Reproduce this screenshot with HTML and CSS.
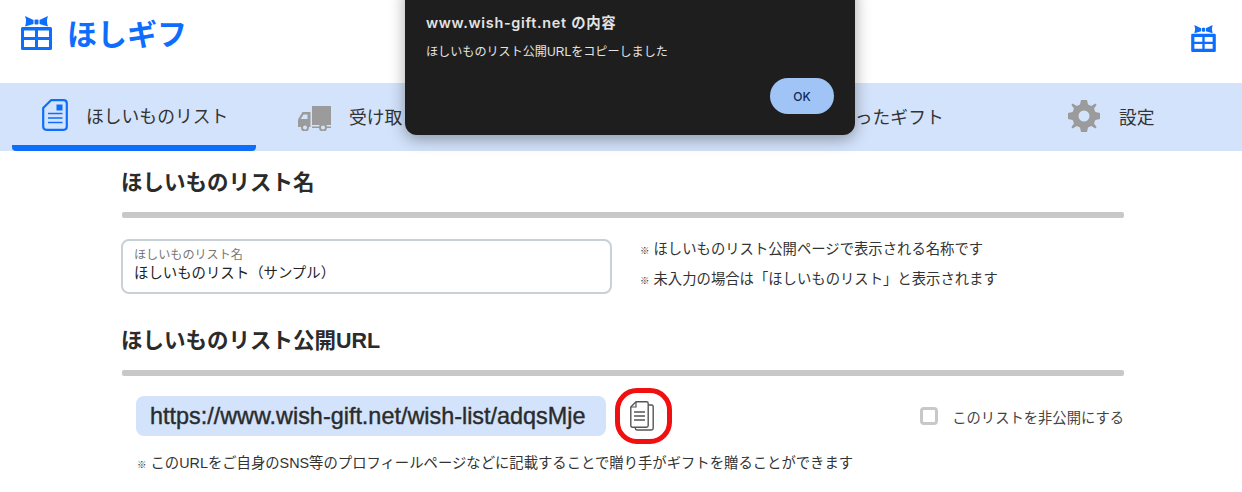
FILE: index.html
```html
<!DOCTYPE html>
<html lang="ja">
<head>
    <meta charset="UTF-8">
    <title>ほしギフ</title>
    <link rel="stylesheet" href="styles.css">
</head>
<body>
    <header class="site-header">
        <a class="logo">
            <svg class="logo-icon" viewBox="0 0 31 34">
                <path d="M4 0 L12.5 4 V8 L4 10.5 Q6 5 4 0Z M27 0 L18.5 4 V8 L27 10.5 Q25 5 27 0Z" fill="#0d6efd"/>
                <rect x="13.5" y="3.5" width="4" height="5" rx="1" fill="#0d6efd"/>
                <path fill-rule="evenodd" d="M1.5 11 H29.5 Q31 11 31 12.5 V32.5 Q31 34 29.5 34 H1.5 Q0 34 0 32.5 V12.5 Q0 11 1.5 11Z M3 14.5 V21 H14 V14.5Z M17 14.5 V21 H28 V14.5Z M3 24 V31 H14 V24Z M17 24 V31 H28 V24Z" fill="#0d6efd"/>
            </svg>
            <span class="logo-text">ほしギフ</span>
        </a>
        <svg class="user-icon" viewBox="0 0 31 34">
            <path d="M4 0 L12.5 4 V8 L4 10.5 Q6 5 4 0Z M27 0 L18.5 4 V8 L27 10.5 Q25 5 27 0Z" fill="#0d6efd"/>
            <rect x="13.5" y="3.5" width="4" height="5" rx="1" fill="#0d6efd"/>
            <path fill-rule="evenodd" d="M1.5 11 H29.5 Q31 11 31 12.5 V32.5 Q31 34 29.5 34 H1.5 Q0 34 0 32.5 V12.5 Q0 11 1.5 11Z M4 15 V21 H14 V15Z M17 15 V21 H27 V15Z M4 24 V30 H14 V24Z M17 24 V30 H27 V24Z" fill="#0d6efd"/>
        </svg>
    </header>

    <nav class="tabs">
        <a class="tab active">
            <svg class="tab-icon doc-icon" viewBox="0 0 26 32">
                <path d="M9 1.2 H21.5 Q24.8 1.2 24.8 4.5 V27.5 Q24.8 30.8 21.5 30.8 H4.5 Q1.2 30.8 1.2 27.5 V9 Z" fill="none" stroke="#0d6efd" stroke-width="2.2" stroke-linejoin="round"/>
                <rect x="14.5" y="5.5" width="6" height="6" fill="#0d6efd"/>
                <path d="M6 14.5 H20.5 M6 19 H20.5 M6 23.5 H20.5" stroke="#0d6efd" stroke-width="1.6"/>
            </svg>
            <span>ほしいものリスト</span>
        </a>
        <a class="tab">
            <svg class="tab-icon truck-icon" viewBox="0 0 33 25">
                <rect x="14" y="0" width="19" height="19" fill="#9b9b9b"/>
                <path d="M12.5 6 V21 H0 V13.5 L4.5 6 Z" fill="#9b9b9b"/>
                <path d="M5.5 8.5 H9.5 V13 H2.8 Z" fill="#d3e3fb"/>
                <rect x="14" y="20.5" width="19" height="1.5" fill="#9b9b9b"/>
                <circle cx="7" cy="21.5" r="3" fill="#d3e3fb" stroke="#9b9b9b" stroke-width="2"/>
                <circle cx="25" cy="21.5" r="3" fill="#d3e3fb" stroke="#9b9b9b" stroke-width="2"/>
            </svg>
            <span>受け取りリスト</span>
        </a>
        <a class="tab">
            <span>もらったギフト</span>
        </a>
        <a class="tab tab-sent">
            <span>贈ったギフト</span>
        </a>
        <a class="tab tab-settings">
            <svg class="tab-icon gear-icon" viewBox="0 0 32 32">
                <path fill-rule="evenodd" fill="#9b9b9b" d="M13 0 L12 4.6 L8.7 6 L4.7 3.4 L3.4 4.7 L6 8.7 L4.6 12 L0 13 V19 L4.6 20 L6 23.3 L3.4 27.3 L4.7 28.6 L8.7 26 L12 27.4 L13 32 H19 L20 27.4 L23.3 26 L27.3 28.6 L28.6 27.3 L26 23.3 L27.4 20 L32 19 V13 L27.4 12 L26 8.7 L28.6 4.7 L27.3 3.4 L23.3 6 L20 4.6 L19 0 Z M16 10.5 A5.5 5.5 0 1 0 16 21.5 A5.5 5.5 0 1 0 16 10.5 Z"/>
            </svg>
            <span>設定</span>
        </a>
    </nav>

    <main class="content">
        <h2 class="section-title">ほしいものリスト名</h2>
        <div class="rule"></div>
        <div class="name-row">
            <div class="name-field">
                <label>ほしいものリスト名</label>
                <div class="name-value">ほしいものリスト（サンプル）</div>
            </div>
            <div class="name-notes">
                <p class="note"><small>※</small> ほしいものリスト公開ページで表示される名称です</p>
                <p class="note"><small>※</small> 未入力の場合は「ほしいものリスト」と表示されます</p>
            </div>
        </div>

        <h2 class="section-title">ほしいものリスト公開URL</h2>
        <div class="rule"></div>
        <div class="url-row">
            <div class="url-box">https://www.wish-gift.net/wish-list/adqsMje</div>
            <div class="copy-mark">
                <svg class="copy-icon" viewBox="0 0 24 30">
                    <path d="M18 4 H21.5 Q23.2 4 23.2 5.7 V27.3 Q23.2 29 21.5 29 H7 Q5.3 29 5.3 27.3 V26" fill="none" stroke="#555" stroke-width="1.4"/>
                    <path d="M6 0.8 H16.5 Q18.2 0.8 18.2 2.5 V24.5 Q18.2 26.2 16.5 26.2 H2.5 Q0.8 26.2 0.8 24.5 V6 Z" fill="#fff" stroke="#555" stroke-width="1.4" stroke-linejoin="round"/>
                    <path d="M6 1 V6 H1" fill="none" stroke="#555" stroke-width="1.2"/>
                    <path d="M4 11 H15 M4 15 H15 M4 19 H15" stroke="#555" stroke-width="1.3"/>
                </svg>
            </div>
            <label class="private-check">
                <span class="check-box"></span>
                <span>このリストを非公開にする</span>
            </label>
        </div>
        <p class="note url-note"><small>※</small> このURLをご自身のSNS等のプロフィールページなどに記載することで贈り手がギフトを贈ることができます</p>
    </main>

    <div class="alert-dialog">
        <div class="alert-title">www.wish-gift.net の内容</div>
        <div class="alert-message">ほしいものリスト公開URLをコピーしました</div>
        <div class="alert-actions">
            <button class="alert-ok">OK</button>
        </div>
    </div>
</body>
</html>
```

FILE: styles.css
```css
* {
    box-sizing: border-box;
    margin: 0;
    padding: 0;
}

body {
    background: #ffffff;
    color: #333333;
    font-family: "Liberation Sans", "Noto Sans CJK JP", sans-serif;
    overflow: hidden;
}

.site-header {
    height: 83px;
    display: flex;
    justify-content: space-between;
    padding: 16px 26px 0 21px;
}

.logo {
    display: flex;
    align-items: flex-start;
    gap: 15px;
}

.logo-icon {
    width: 31px;
    height: 34px;
}

.logo-text {
    color: #0d6efd;
    font-size: 30px;
    font-weight: 700;
    line-height: 38px;
}

.user-icon {
    width: 25px;
    height: 27px;
    margin-top: 9px;
}

.tabs {
    height: 68px;
    background: #d3e3fb;
    display: flex;
    gap: 12px;
    padding: 0 12px;
}

.tab {
    width: 244px;
    flex: none;
    display: flex;
    align-items: center;
    gap: 18px;
    padding: 0 0 2px 30px;
    font-size: 17.8px;
    color: #333333;
    white-space: nowrap;
}

.tab.active {
    border-bottom: 6px solid #0d6efd;
    padding-top: 2px;
    padding-bottom: 0;
    border-radius: 0 0 4px 4px;
}

.tab-icon {
    flex: none;
}

.doc-icon {
    width: 26px;
    height: 32px;
}

.truck-icon {
    width: 33px;
    height: 25px;
    margin-top: 4px;
}

.gear-icon {
    width: 32px;
    height: 32px;
}

.tab-sent {
    padding-left: 57px;
}

.tab-settings {
    padding-left: 32px;
    gap: 19px;
}

.content {
    width: 1002px;
    margin-left: 122px;
}

.section-title {
    font-size: 21.5px;
    font-weight: 700;
    line-height: 30px;
    color: #2b2b2b;
    white-space: nowrap;
    margin-left: -1px;
    padding-top: 17px;
    height: 61px;
}

.rule {
    height: 6px;
    background: #c8c8c8;
    border-radius: 2px;
}

.name-row {
    display: flex;
    margin-top: 21px;
    margin-bottom: 15px;
    gap: 28px;
}

.name-field {
    width: 491px;
    height: 55px;
    margin-left: -1px;
    border: 2px solid #c8d0d8;
    border-radius: 8px;
    padding: 7px 11px;
}

.name-field label {
    display: block;
    font-size: 12.1px;
    line-height: 15px;
    color: #777777;
}

.name-value {
    font-size: 14.4px;
    line-height: 20px;
    color: #222222;
    white-space: nowrap;
}

.note {
    font-size: 14.35px;
    line-height: 20px;
    color: #333333;
    white-space: nowrap;
}

.note small {
    font-size: 9.5px;
    font-weight: 700;
}

.name-notes .note + .note {
    margin-top: 8px;
}

.url-row {
    display: flex;
    align-items: center;
    margin-top: 13px;
    height: 54px;
    padding-left: 14px;
}

.url-box {
    width: 470px;
    height: 40px;
    background: #d3e3fb;
    border-radius: 8px;
    padding-left: 14px;
    font-size: 23.4px;
    line-height: 40px;
    color: #2b2b2b;
    white-space: nowrap;
    -webkit-text-stroke: 0.4px #2b2b2b;
}

.copy-mark {
    width: 57px;
    height: 56px;
    margin-left: 9px;
    border: 5px solid #f01010;
    border-radius: 22px;
    display: flex;
    align-items: center;
    justify-content: center;
}

.copy-icon {
    width: 24px;
    height: 30px;
    margin-right: 3px;
}

.private-check {
    margin-left: auto;
    display: flex;
    align-items: center;
    gap: 14px;
    font-size: 14.3px;
    color: #444444;
    white-space: nowrap;
}

.check-box {
    width: 18px;
    height: 18px;
    border: 3px solid #c8c8c8;
    border-radius: 4px;
}

.url-note {
    margin-top: 10px;
    padding-left: 15px;
}

.alert-dialog {
    position: absolute;
    left: 405px;
    top: -20px;
    width: 450px;
    height: 155px;
    background: #1e1e1e;
    border-radius: 12px;
    box-shadow: 0 4px 16px rgba(0, 0, 0, 0.35);
    padding: 33px 21px 0;
    color: #e3e3e3;
}

.alert-title {
    font-family: Inter, "Noto Sans CJK JP", sans-serif;
    font-size: 14.4px;
    font-weight: 600;
    line-height: 20px;
    letter-spacing: 0.7px;
}

.alert-message {
    font-size: 12.1px;
    line-height: 18px;
    margin-top: 10px;
}

.alert-actions {
    display: flex;
    justify-content: flex-end;
    margin-top: 17px;
}

.alert-ok {
    width: 64px;
    height: 36px;
    border: none;
    border-radius: 18px;
    background: #a1c4f7;
    color: #0b2a5b;
    font-family: Inter, sans-serif;
    font-size: 12px;
    font-weight: 500;
}
```
